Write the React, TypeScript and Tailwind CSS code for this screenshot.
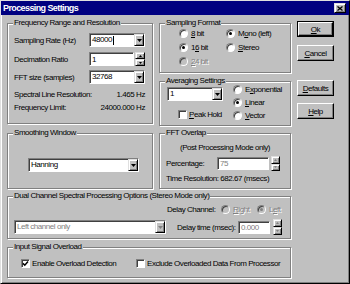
import React from 'react';

const FONT = "font-['Liberation_Sans',Arial,sans-serif]";
const sunken =
  'border border-t-[#808080] border-l-[#808080] border-r-white border-b-white shadow-[inset_1px_1px_0_#404040]';
const raised =
  'bg-[#c0c0c0] border border-t-[#dfdfdf] border-l-[#dfdfdf] border-r-black border-b-black shadow-[inset_1px_1px_0_#fff,inset_-1px_-1px_0_#808080]';
const grayText = 'text-[#808080] [text-shadow:1px_1px_0_#fff]';

function Group({ label, className = '', children }: { label: string; className?: string; children?: React.ReactNode }) {
  return (
    <div className={`relative border border-[#808080] shadow-[inset_1px_1px_0_#fff,1px_1px_0_#fff] ${className}`}>
      <span className="absolute -top-[7px] left-[5px] px-[1px] bg-[#c0c0c0] leading-[12px]">{label}</span>
      {children}
    </div>
  );
}

function Arrow({ gray }: { gray?: boolean }) {
  return (
    <svg width="5" height="3" viewBox="0 0 5 3">
      <polygon points="0,0 5,0 2.5,3" fill={gray ? '#808080' : '#000'} />
    </svg>
  );
}

function Combo({ value, className = '', disabled, caret }: { value: string; className?: string; disabled?: boolean; caret?: boolean }) {
  return (
    <div className={`flex h-[14px] bg-white ${sunken} ${className}`}>
      <div className={`flex-1 flex items-center pl-[2px] leading-[12px] ${disabled ? 'text-[#808080]' : ''}`}>
        {value}
        {caret && <span className="w-[1px] h-[9px] bg-black ml-[1px]" />}
      </div>
      <div className={`w-[10px] h-[12px] flex items-center justify-center ${raised}`}>
        <Arrow gray={disabled} />
      </div>
    </div>
  );
}

function Spinner({ className = '', gray }: { className?: string; gray?: boolean }) {
  return (
    <div className={`flex flex-col ${className}`}>
      <div className={`flex-1 flex items-center justify-center ${raised}`}>
        <svg width="3" height="2" viewBox="0 0 3 2">
          <polygon points="1.5,0 3,2 0,2" fill={gray ? '#808080' : '#000'} />
        </svg>
      </div>
      <div className={`flex-1 flex items-center justify-center ${raised}`}>
        <svg width="3" height="2" viewBox="0 0 3 2">
          <polygon points="0,0 3,0 1.5,2" fill={gray ? '#808080' : '#000'} />
        </svg>
      </div>
    </div>
  );
}

function Field({ value, className = '', disabled }: { value: string; className?: string; disabled?: boolean }) {
  return (
    <div className={`flex items-center pl-[2px] bg-white leading-[11px] ${sunken} ${disabled ? 'text-[#808080]' : ''} ${className}`}>
      {value}
    </div>
  );
}

function Radio({ checked, disabled, children, className = '' }: { checked?: boolean; disabled?: boolean; children: React.ReactNode; className?: string }) {
  return (
    <div className={`flex items-center h-[13px] ${className}`}>
      <span className={`w-[9px] h-[9px] shrink-0 rounded-full flex items-center justify-center ${sunken} ${disabled ? 'bg-[#c0c0c0]' : 'bg-white'}`}>
        {checked && <span className={`w-[3px] h-[3px] rounded-full ${disabled ? 'bg-[#808080]' : 'bg-black'}`} />}
      </span>
      <span className={`ml-[3px] ${disabled ? grayText : ''}`}>{children}</span>
    </div>
  );
}

function Check({ checked, children, className = '' }: { checked?: boolean; children: React.ReactNode; className?: string }) {
  return (
    <div className={`flex items-center h-[13px] ${className}`}>
      <span className={`w-[9px] h-[9px] shrink-0 bg-white flex items-center justify-center ${sunken}`}>
        {checked && (
          <svg width="7" height="7" viewBox="0 0 7 7">
            <path d="M1 3.4L2.8 5.2L6 1.6" stroke="#000" strokeWidth="1.5" fill="none" />
          </svg>
        )}
      </span>
      <span className="ml-[2px]">{children}</span>
    </div>
  );
}

function Btn({ children, def, className = '' }: { children: React.ReactNode; def?: boolean; className?: string }) {
  return (
    <div className={`w-[37px] h-[16px] flex ${def ? 'border border-black' : ''} ${className}`}>
      <div className="flex-1 flex items-center justify-center bg-[#c0c0c0] border border-t-white border-l-white border-r-black border-b-black shadow-[inset_-1px_-1px_0_#808080] leading-[11px]">
        {children}
      </div>
    </div>
  );
}

export default function App() {
  return (
    <div
      className={`w-[350px] h-[284px] flex flex-col bg-[#c0c0c0] text-black text-[8px] tracking-[-0.45px] leading-[13px] whitespace-nowrap ${FONT} border border-t-[#dfdfdf] border-l-[#dfdfdf] border-r-black border-b-black shadow-[inset_1px_1px_0_#fff,inset_-1px_-1px_0_#808080] select-none`}
    >
      {/* title bar */}
      <div className="h-[14px] flex items-center justify-between bg-[#000080] pl-[2px] pr-[3px]">
        <span className="text-white font-bold text-[9px] tracking-[-0.6px] leading-[14px]">Processing Settings</span>
        <div className={`w-[12px] h-[10px] flex items-center justify-center ${raised}`}>
          <svg width="6" height="5" viewBox="0 0 6 5">
            <path d="M0.5 0.5L5.5 4.5M5.5 0.5L0.5 4.5" stroke="#000" strokeWidth="1.3" />
          </svg>
        </div>
      </div>

      <div className="flex flex-col pl-[6px] pt-[8px]">
        <div className="flex">
          {/* left column */}
          <div className="flex flex-col w-[146px]">
            <Group label="Frequency Range and Resolution" className="h-[101px] flex flex-col pl-[6px] pr-[7px] pt-[9px]">
              <div className="flex items-center justify-between h-[14px]">
                <span>Sampling Rate (Hz)</span>
                <Combo value="48000" caret className="w-[56px]" />
              </div>
              <div className="flex items-center justify-between h-[14px] mt-[5px]">
                <span>Decimation Ratio</span>
                <div className="flex">
                  <Field value="1" className="w-[45px] h-[14px]" />
                  <Spinner className="w-[10px] h-[14px] ml-[1px]" />
                </div>
              </div>
              <div className="flex items-center justify-between h-[14px] mt-[4px]">
                <span>FFT size (samples)</span>
                <Combo value="32768" className="w-[56px]" />
              </div>
              <div className="flex justify-between h-[13px] mt-[4px]">
                <span>Spectral Line Resolution:</span>
                <span>1.465 Hz</span>
              </div>
              <div className="flex justify-between h-[13px]">
                <span>Frequency Limit:</span>
                <span>24000.000 Hz</span>
              </div>
            </Group>
            <Group label="Smoothing Window" className="h-[56px] mt-[9px] pl-[20px] pt-[24px]">
              <Combo value="Hanning" className="w-[111px]" />
            </Group>
          </div>

          {/* middle column */}
          <div className="flex flex-col w-[132px] ml-[6px]">
            <Group label="Sampling Format" className="h-[50px]">
              <div className="grid grid-cols-[47px_1fr] auto-rows-[13px] gap-y-[1px] pl-[19px] pt-[3px]">
                <Radio><u>8</u> bit</Radio>
                <Radio checked>M<u>o</u>no (left)</Radio>
                <Radio checked>1<u>6</u> bit</Radio>
                <Radio><u>S</u>tereo</Radio>
                <Radio disabled><u>2</u>4 bit</Radio>
              </div>
            </Group>
            <Group label="Averaging Settings" className="h-[45px] mt-[8px] flex">
              <div className="flex flex-col pl-[7px] pt-[5px]">
                <Combo value="1" className="w-[56px]" />
                <Check className="mt-[7px] ml-[11px]"><u>P</u>eak Hold</Check>
              </div>
              <div className="flex flex-col ml-[10px] pt-[1px]">
                <Radio>E<u>x</u>ponential</Radio>
                <Radio checked><u>L</u>inear</Radio>
                <Radio><u>V</u>ector</Radio>
              </div>
            </Group>
            <Group label="FFT Overlap" className="h-[56px] mt-[7px] flex flex-col">
              <div className="h-[13px] mt-[7px] text-center">(Post Processing Mode only)</div>
              <div className="h-[15px] mt-[2px] flex items-center pl-[6px]">
                <span className="w-[51px]">Percentage:</span>
                <Field value="75" disabled className="w-[52px] h-[13px]" />
                <Spinner gray className="w-[9px] h-[15px] ml-[2px]" />
              </div>
              <div className="h-[13px] mt-[1px] pl-[6px]">Time Resolution: 682.67 (msecs)</div>
            </Group>
          </div>

          {/* buttons */}
          <div className="flex flex-col ml-[6px] -mt-[2px]">
            <Btn def>
              <u>O</u>k
            </Btn>
            <Btn className="mt-[8px]">
              <u>C</u>ancel
            </Btn>
            <Btn className="mt-[19px]">
              <u>D</u>efaults
            </Btn>
            <Btn className="mt-[7px]">
              <u>H</u>elp
            </Btn>
          </div>
        </div>

        <Group label="Dual Channel Spectral Processing Options (Stereo Mode only)" className="w-[284px] h-[43px] mt-[7px] flex flex-col">
          <div className="h-[13px] mt-[6px] pl-[159px] flex items-center">
            <span className="w-[54px]">Delay Channel:</span>
            <Radio disabled className="w-[36px]">
              <u>R</u>ight
            </Radio>
            <Radio disabled checked>
              L<u>e</u>ft
            </Radio>
          </div>
          <div className="h-[16px] mt-[3px] pl-[6px] flex items-center">
            <Combo value="Left channel only" disabled className="w-[152px]" />
            <span className="ml-[11px] w-[61px]">Delay time (msec):</span>
            <Field value="0.000" disabled className="w-[32px] h-[13px]" />
            <Spinner gray className="w-[9px] h-[16px] ml-[3px]" />
          </div>
        </Group>

        <Group label="Input Signal Overload" className="w-[284px] h-[31px] mt-[8px] flex items-start pl-[13px] pt-[9px]">
          <Check checked className="w-[115px]">Enable Overload Detection</Check>
          <Check>Exclude Overloaded Data From Processor</Check>
        </Group>
      </div>
    </div>
  );
}
